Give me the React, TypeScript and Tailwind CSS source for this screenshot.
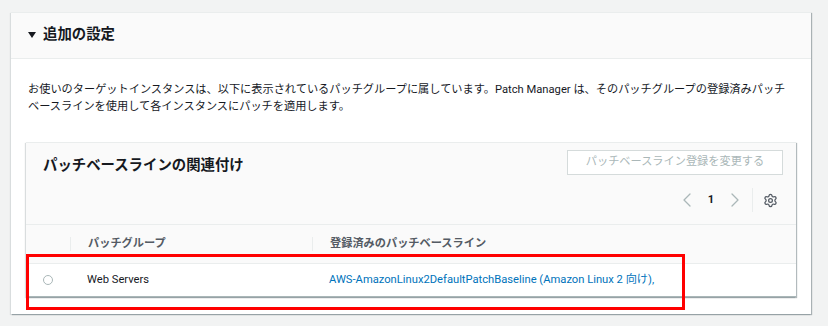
import React from "react";
import { Settings, ChevronLeft, ChevronRight } from "lucide-react";

const FONT = 'Roboto, "Noto Sans CJK JP", sans-serif';

export default function App() {
  return (
    <div
      className="w-[828px] h-[326px] bg-[#f2f3f3] pt-[12px] pl-[11px] relative overflow-hidden"
      style={{ fontFamily: FONT }}
    >
      <div className="w-[800px] h-[302px] bg-white border-t border-[#eaeded] shadow-[1px_1px_1px_0_rgba(0,28,36,0.3),-1px_1px_1px_0_rgba(0,28,36,0.1)] flex flex-col">
        {/* header */}
        <div className="h-[46px] bg-[#fafafa] border-b border-[#eaeded] flex items-center pl-[17px] pb-[2px]">
          <svg width="8" height="6" viewBox="0 0 8 6" className="mr-[7px] mt-[1px]">
            <polygon points="0,0 8,0 4,6" fill="#16191f" />
          </svg>
          <span className="text-[14.4px] font-bold text-[#16191f] leading-[20px]">追加の設定</span>
        </div>
        {/* body */}
        <div className="px-[15px] pt-[22px] flex flex-col">
          <p className="pl-[2px] text-[11.2px] leading-[17px] text-[#16191f]">
            お使いのターゲットインスタンスは、以下に表示されているパッチグループに属しています。Patch Manager は、そのパッチグループの登録済みパッチベースラインを使用して各インスタンスにパッチを適用します。
          </p>
          <div className="mt-[27px] h-[155px] bg-white border-t border-[#eaeded] shadow-[1px_1px_1px_0_rgba(0,28,36,0.3),-1px_1px_1px_0_rgba(0,28,36,0.15)] flex flex-col">
            <div className="bg-[#fafafa] pt-[7px] pl-[17px] pr-[13px] pb-[12px] border-b border-[#eaeded]">
              <div className="flex justify-between items-start">
                <span className="mt-[6px] text-[14.4px] font-bold leading-[20px] text-[#16191f]">
                  パッチベースラインの関連付け
                </span>
                <div className="w-[216px] h-[25px] border border-[#d5dbdb] bg-white flex items-center justify-center text-[11.2px] text-[#aab7b8]">
                  パッチベースライン登録を変更する
                </div>
              </div>
              <div className="mt-[12px] h-[24px] flex items-center justify-end">
                <ChevronLeft size={24} strokeWidth={1.3} color="#aab7b8" />
                <span className="text-[11.2px] font-bold text-[#16191f] w-[24px] text-center">1</span>
                <ChevronRight size={24} strokeWidth={1.3} color="#aab7b8" />
                <div className="w-px h-[24px] bg-[#eaeded] ml-[5px] mr-[10px]" />
                <Settings size={15} strokeWidth={2} color="#545b64" className="mr-[5px]" />
              </div>
            </div>
            {/* column headers */}
            <div className="h-[39px] bg-[#fafafa] border-b border-[#eaeded] flex items-center text-[11.2px] font-bold text-[#545b64]">
              <div className="w-[44px]" />
              <div className="w-px h-[14px] bg-[#eaeded]" />
              <div className="w-[241px] pl-[17px]">パッチグループ</div>
              <div className="w-px h-[14px] bg-[#eaeded]" />
              <div className="pl-[17px]">登録済みのパッチベースライン</div>
            </div>
            {/* row */}
            <div className="flex-1 flex items-center text-[11.2px] border-b border-[#aab7b8]">
              <div className="w-[44px] flex justify-center">
                <div className="w-[10px] h-[10px] rounded-full border border-[#aab7b8] bg-white" />
              </div>
              <div className="w-[242px] pl-[17px] text-[#16191f]">Web Servers</div>
              <div className="pl-[17px] text-[#0073bb]">
                AWS-AmazonLinux2DefaultPatchBaseline (Amazon Linux 2 向け),
              </div>
            </div>
          </div>
        </div>
      </div>
      {/* red annotation */}
      <div className="absolute left-[26px] top-[254px] w-[659px] h-[56px] border-[3px] border-[#ff0000]" />
    </div>
  );
}
